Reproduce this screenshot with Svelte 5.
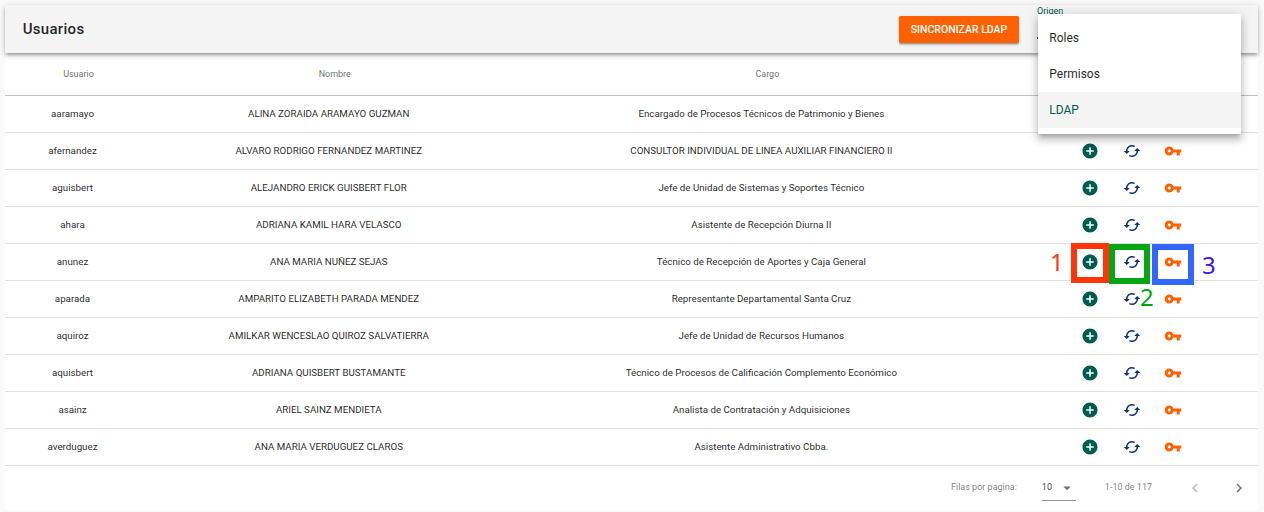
<script>
  const rows = [
    ['aaramayo', 'ALINA ZORAIDA ARAMAYO GUZMAN', 'Encargado de Procesos Técnicos de Patrimonio y Bienes'],
    ['afernandez', 'ALVARO RODRIGO FERNANDEZ MARTINEZ', 'CONSULTOR INDIVIDUAL DE LINEA AUXILIAR FINANCIERO II'],
    ['aguisbert', 'ALEJANDRO ERICK GUISBERT FLOR', 'Jefe de Unidad de Sistemas y Soportes Técnico'],
    ['ahara', 'ADRIANA KAMIL HARA VELASCO', 'Asistente de Recepción Diurna II'],
    ['anunez', 'ANA MARIA NUÑEZ SEJAS', 'Técnico de Recepción de Aportes y Caja General'],
    ['aparada', 'AMPARITO ELIZABETH PARADA MENDEZ', 'Representante Departamental Santa Cruz'],
    ['aquiroz', 'AMILKAR WENCESLAO QUIROZ SALVATIERRA', 'Jefe de Unidad de Recursos Humanos'],
    ['aquisbert', 'ADRIANA QUISBERT BUSTAMANTE', 'Técnico de Procesos de Calificación Complemento Económico'],
    ['asainz', 'ARIEL SAINZ MENDIETA', 'Analista de Contratación y Adquisiciones'],
    ['averduguez', 'ANA MARIA VERDUGUEZ CLAROS', 'Asistente Administrativo Cbba.']
  ];
  const options = ['Roles', 'Permisos', 'LDAP'];
  const selected = 'LDAP';
</script>

<main>
  <header>
    <h1>Usuarios</h1>
    <button class="sync">SINCRONIZAR LDAP</button>
    <div class="select">
      <span class="label">Origen</span>
      <span class="line"></span>
      <div class="menu">
        {#each options as option}
          <div class="option" class:active={option === selected}>{option}</div>
        {/each}
      </div>
    </div>
  </header>

  <section>
    <div class="row head">
      <span>Usuario</span><span>Nombre</span><span>Cargo</span><span></span>
    </div>
    {#each rows as [user, name, post]}
      <div class="row body">
        <span>{user}</span>
        <span>{name}</span>
        <span>{post}</span>
        <div class="actions">
          <svg viewBox="0 0 24 24" fill="#005b50"><path d="M12 2C6.48 2 2 6.48 2 12s4.48 10 10 10 10-4.48 10-10S17.52 2 12 2zm5 11h-4v4h-2v-4H7v-2h4V7h2v4h4v2z" /></svg>
          <svg viewBox="0 0 24 24" fill="#0d3386"><path d="M19 8l-4 4h3c0 3.31-2.69 6-6 6-1.01 0-1.97-.25-2.8-.7l-1.46 1.46C8.97 19.54 10.43 20 12 20c4.42 0 8-3.58 8-8h3l-4-4zM6 12c0-3.31 2.69-6 6-6 1.01 0 1.97.25 2.8.7l1.46-1.46C15.03 4.46 13.57 4 12 4c-4.42 0-8 3.58-8 8H1l4 4 4-4H6z" /></svg>
          <svg viewBox="0 0 24 24" fill="#ff6100"><path d="M12.65 10C11.83 7.67 9.61 6 7 6c-3.31 0-6 2.69-6 6s2.69 6 6 6c2.61 0 4.83-1.67 5.65-4H17v4h4v-4h2v-4H12.65zM7 14c-1.1 0-2-.9-2-2s.9-2 2-2 2 .9 2 2-.9 2-2 2z" /></svg>
        </div>
      </div>
    {/each}
    <footer>
      <span class="per">Filas por pagina:</span>
      <span class="size">10<svg viewBox="0 0 24 24" fill="#757575"><path d="M7 10l5 5 5-5z" /></svg></span>
      <span class="range">1-10 de 117</span>
      <svg class="prev" viewBox="0 0 24 24" fill="#bdbdbd"><path d="M15.41 7.41L14 6l-6 6 6 6 1.41-1.41L10.83 12z" /></svg>
      <svg class="next" viewBox="0 0 24 24" fill="#707070"><path d="M10 6L8.59 7.41 13.17 12l-4.58 4.59L10 18l6-6z" /></svg>
    </footer>
  </section>

  <div class="mark red"></div>
  <div class="mark green"></div>
  <div class="mark blue"></div>
  <span class="digit one">1</span>
  <span class="digit two">2</span>
  <span class="digit three">3</span>
</main>

<style>
  :global(body) { background: #fafafa; }
  main {
    position: relative;
    box-sizing: border-box;
    width: 1264px;
    height: 512px;
    padding: 5px 6px 2px 5px;
    overflow: hidden;
    background: #fafafa;
    font-family: Roboto, sans-serif;
    color: rgba(0, 0, 0, 0.87);
  }
  header {
    position: relative;
    z-index: 1;
    display: flex;
    align-items: center;
    height: 48px;
    box-sizing: border-box;
    padding: 0 17px 0 17.7px;
    background: #f4f4f4;
    box-shadow: 0 1.5px 3px -0.75px rgba(0, 0, 0, 0.3), 0 3px 3.75px rgba(0, 0, 0, 0.16), 0 0.75px 7.5px rgba(0, 0, 0, 0.14);
  }
  h1 {
    flex: 1;
    margin: 0;
    font-size: 15px;
    font-weight: 500;
    letter-spacing: 0.3px;
  }
  .sync {
    width: 120px;
    height: 27px;
    margin: 0 18px 0 0;
    padding: 0;
    border: 0;
    border-radius: 1.5px;
    background: #ff6100;
    color: #fff;
    font: 500 10.5px Roboto, sans-serif;
    box-shadow: 0 2px 1px -1px rgba(0, 0, 0, 0.2), 0 1.5px 1.5px rgba(0, 0, 0, 0.14), 0 1px 4px rgba(0, 0, 0, 0.12);
  }
  .select {
    position: relative;
    width: 204px;
    height: 48px;
    color: #005b50;
  }
  .label {
    display: block;
    font-size: 9px;
    line-height: 12px;
  }
  .line {
    display: block;
    height: 1.5px;
    margin-top: 20px;
    background: #005b50;
  }
  .menu {
    position: absolute;
    top: 9px;
    left: 1px;
    width: 203px;
    padding: 6px 0;
    background: #fff;
    border-radius: 1.5px;
    box-shadow: 0 3.75px 3.75px -2.25px rgba(0, 0, 0, 0.2), 0 6px 7.5px 0.75px rgba(0, 0, 0, 0.14), 0 2.25px 10.5px 1.5px rgba(0, 0, 0, 0.12);
  }
  .option {
    height: 36px;
    padding-left: 11.3px;
    font-size: 12px;
    line-height: 36px;
    color: rgba(0, 0, 0, 0.87);
  }
  .option.active { background: #f4f4f4; color: #005b50; }
  section { height: 457px; background: #fff; }
  .row {
    display: grid;
    grid-template-columns: 135px 377.5px 487.7px 252.8px;
    align-items: center;
    box-sizing: border-box;
    height: 37px;
    border-bottom: 1px solid #e0e0e0;
    font-size: 9.75px;
    text-align: center;
  }
  .body > span { padding-bottom: 2px; }
  .head {
    height: 43px;
    border-bottom-color: #c0c0c0;
    font-size: 9px;
    color: rgba(0, 0, 0, 0.6);
  }
  .head span { padding-left: 12px; }
  .actions { display: flex; justify-content: center; gap: 23.5px; }
  svg { display: block; width: 18px; height: 18px; flex: none; }
  footer {
    display: flex;
    align-items: center;
    justify-content: flex-end;
    height: 44px;
    padding-right: 10px;
    font-size: 9px;
    color: rgba(0, 0, 0, 0.54);
  }
  .per { margin-right: 25px; padding-bottom: 2px; }
  .size {
    display: flex;
    align-items: center;
    justify-content: space-between;
    box-sizing: border-box;
    width: 34px;
    height: 26px;
    margin-right: 29px;
    padding-bottom: 1px;
    border-bottom: 1px solid #949494;
    color: rgba(0, 0, 0, 0.76);
  }
  .size svg { margin-top: 2px; }
  .range { margin-right: 34px; padding-bottom: 2px; }
  .prev { margin-right: 26px; }
  .mark {
    position: absolute;
    z-index: 2;
    box-sizing: border-box;
    border: 6px solid;
  }
  .red { left: 1071px; top: 243px; width: 38px; height: 40px; border-color: #ff3409; }
  .green { left: 1109px; top: 244px; width: 41px; height: 40px; border-color: #06a513; }
  .blue { left: 1152px; top: 244px; width: 42px; height: 41px; border-color: #3266ff; }
  .digit {
    position: absolute;
    z-index: 2;
    font: 24px/24px "Noto Sans", sans-serif;
  }
  .one { left: 1050px; top: 250px; color: #ff3409; }
  .two { left: 1140px; top: 285px; color: #06a513; }
  .three { left: 1202px; top: 253px; color: #3818f0; }
</style>
